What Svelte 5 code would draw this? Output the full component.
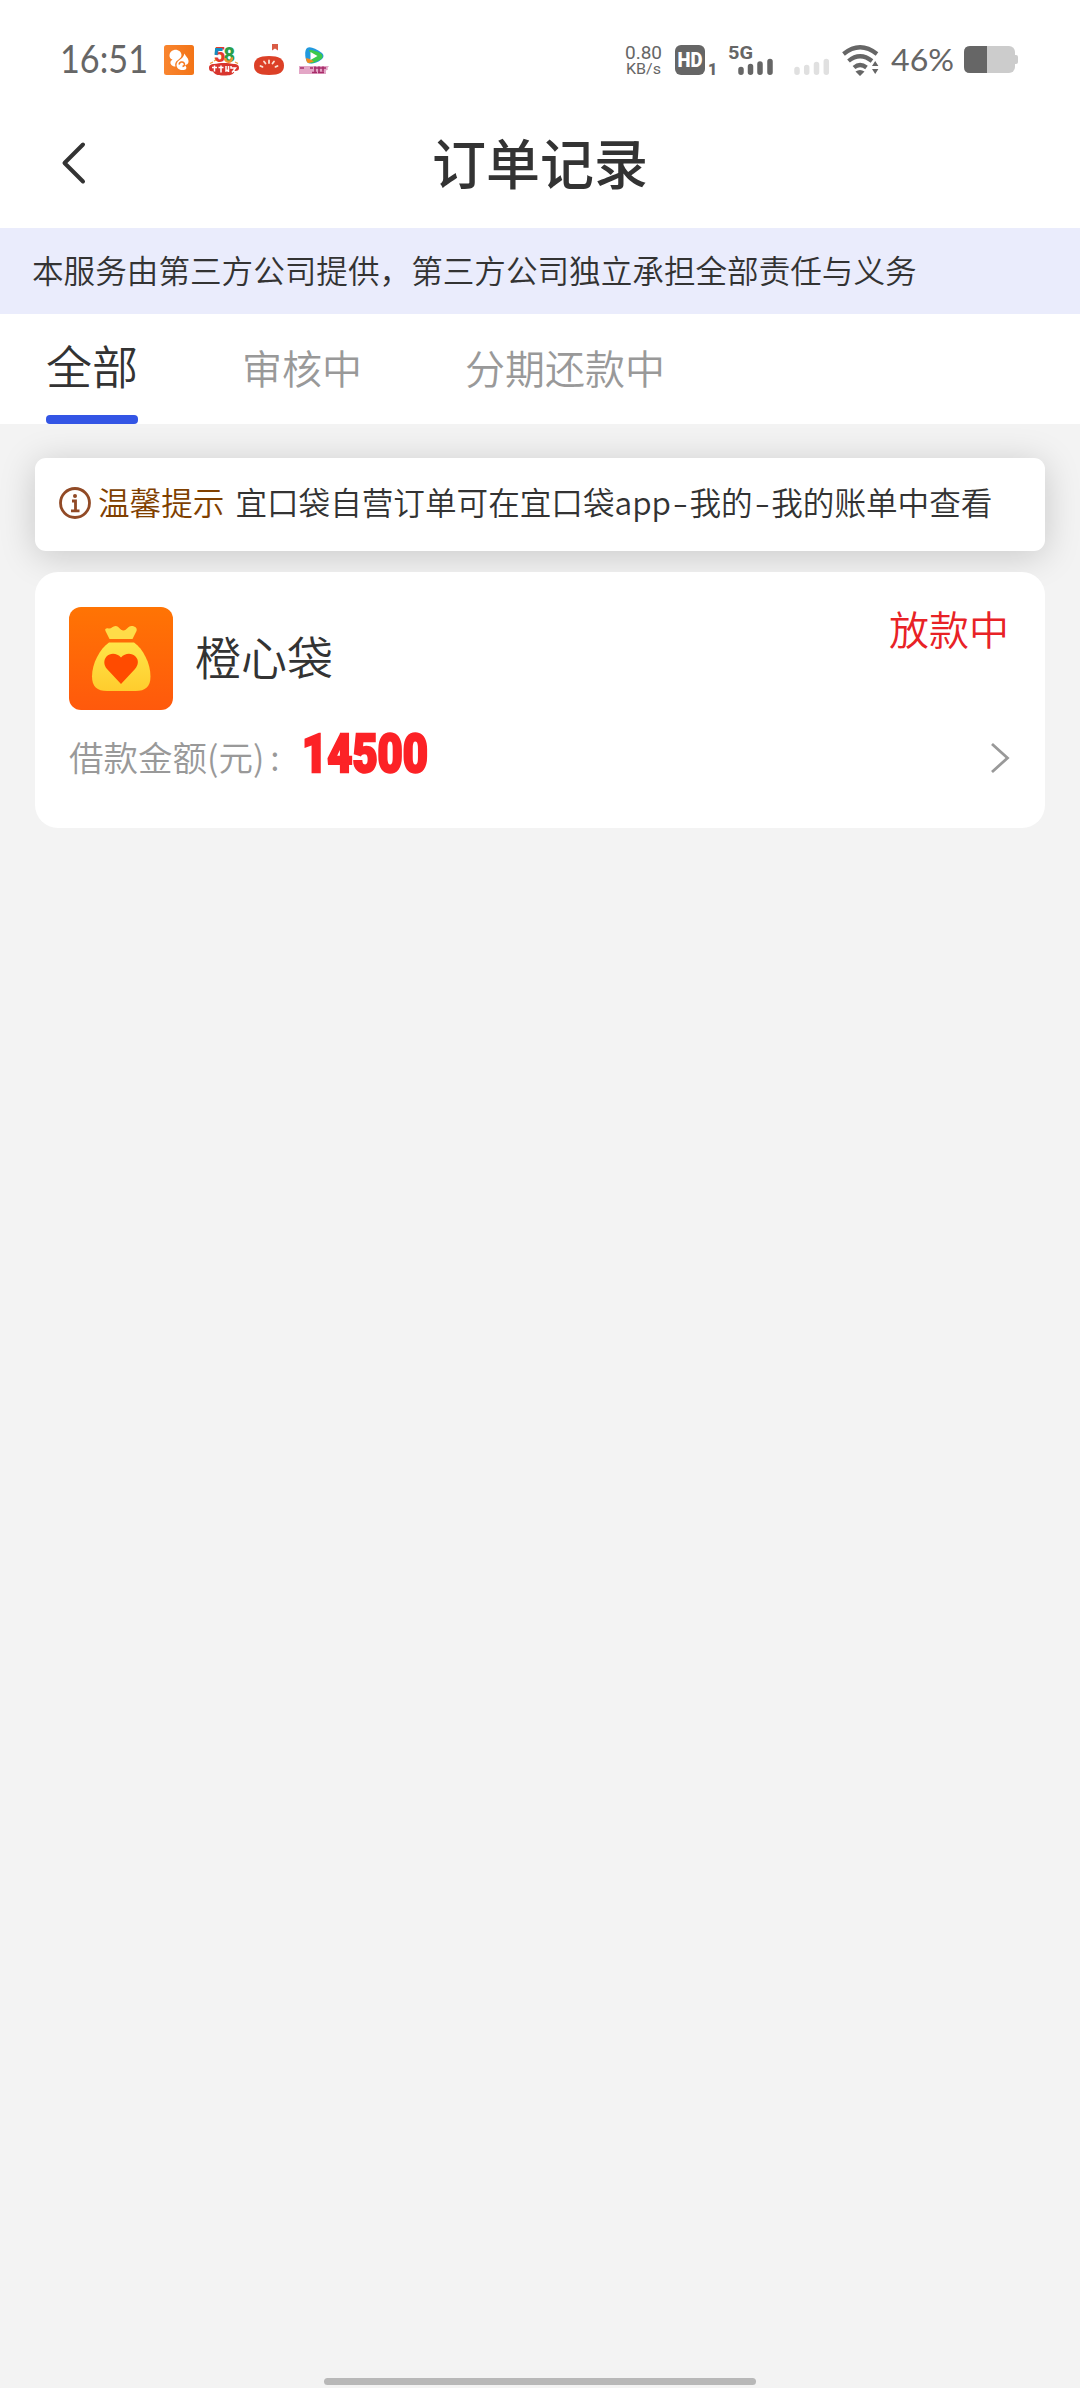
<script lang="ts">
	interface Order {
		name: string;
		amount: number;
		status: string;
	}

	const tabs = ['全部', '审核中', '分期还款中'];
	const orders: Order[] = [{ name: '橙心袋', amount: 14500, status: '放款中' }];

	let active = $state(0);
</script>

<div class="screen">
	<div class="status-bar">
		<svg class="clock" viewBox="0 0 88 40">
			<text x="0" y="33" textLength="88" lengthAdjust="spacingAndGlyphs">16:51</text>
		</svg>

		<div class="notifications">
			<!-- squirrel -->
			<svg viewBox="0 0 32 32">
				<defs>
					<linearGradient id="squirrel" x1="0" y1="0" x2="1" y2="0">
						<stop offset="0" stop-color="#f9852f" />
						<stop offset="1" stop-color="#f37417" />
					</linearGradient>
				</defs>
				<rect x="1" y="1" width="30" height="30" rx="2.5" fill="url(#squirrel)" />
				<path
					fill="#fff"
					d="M11 6c4-.8 7.500 2 7.500 5 0 2-1.500 3.500-3.500 5-2.500 1.500-3.500 4-2.500 6.500-3 0-5.500-2-5-4.500.3-1.500 1.500-2 2-2.500C5.500 15 5 7.500 11 6Z"
				/>
				<path
					fill="#fff"
					d="M21.500 9.500c1 3 4.500 4.500 4 8.500-.2 2-2 2.500-3.500 3.500 1.500 1 2 3 .5 4-3 1-6 .8-8-1.500-2-3-.5-6.500 2-8 2.500-1.500 4-3 5-6.500Z"
				/>
				<path fill="none" stroke="#f67c23" stroke-width="1.500" d="M16 20.500c.5-2.500 3.500-3.500 5-1.500 1 1.500.5 3-1.500 3.500" />
			</svg>

			<!-- 58 -->
			<svg viewBox="0 0 32 32">
				<g class="digits">
					<text x="6" y="18">5</text>
					<text x="15.500" y="18">8</text>
				</g>
				<path fill="none" stroke="#168cc2" stroke-width="3" d="M14.500 5.500H8.500L8 11" />
				<path fill="none" stroke="#f0912d" stroke-width="2.500" d="M17.300 14a3.300 3.300 0 1 0 6.400-.5" />
				<path fill="none" stroke="#e9a23b" stroke-width="1.200" d="m2 19.500 3-1.500m22 0 3 1.500M6 17l2-1" />
				<path fill="#d8352d" d="M1 24c0-3 2-4 5-4 6-1.500 14-1.500 20 0 3 0 5 1 5 4 0 2-1 3-4 3-2 4-5 4.500-11 4.500S7 31 5 27.500c-3 0-4-1-4-3.500Z" />
				<path fill="none" stroke="#fff" stroke-width="1.500" d="M4 23.500h5M6.500 21.500v6M10.500 23.500h5m-2.500-2v7M18 22v5l2.500-1m0-4v6M23 22v2h4.500l-3.500 4.500m1-2.500 2.500 2.500" />
			</svg>

			<!-- tomato -->
			<svg viewBox="0 0 32 32">
				<path fill="#d95b45" d="M19 0h6v6.500l-3-2-3 2Z" />
				<path fill="#dc4027" d="M1 21.500C1 15 6 12 16 12s15 3 15 9.500c0 6.500-4 9.500-15 9.500S1 28 1 21.500Z" />
				<path
					fill="none"
					stroke="#fbe3d4"
					stroke-width="1.800"
					stroke-linecap="round"
					d="M16 16.500V19m-5-1.500 1.500 2m8.500-2-1.500 2M7.500 22l2 .8m15-.8-2 .8"
				/>
			</svg>

			<!-- play -->
			<svg viewBox="0 0 32 32">
				<path fill="#2199dd" d="M9 4c3-2 8 0 15 5 2 2 2 4 0 6-6 5-11 5-14 4-3-2-4-13-1-15Z" />
				<path fill="#3cc94b" d="M11 6c5 0 10 2 12.500 4 2 2 1 5-2 6-5 3-8 4-10.500 2.500l3-5Z" />
				<path fill="#f28a20" d="M8 14c.3 4 1.300 5 3 5l5-1.500-4-2.500Z" />
				<path fill="#fff" d="m12.500 8 7 4-7 4Z" />
				<path fill="#e3a6c6" d="M1 22h30l-1.500 2 .5 1.500-2 1v3.500H1Z" />
				<path fill="none" stroke="#a72c69" stroke-width="1.600" d="M2 24h4m6 0h3m1 0h12M14 28.500h5m1 0h6M17 22.500v6m4-6v6m4-6v5" />
			</svg>
		</div>

		<svg class="rate" viewBox="0 0 38 34">
			<text x="0" y="15.500" font-size="19" textLength="37" lengthAdjust="spacingAndGlyphs">0.80</text>
			<text x="1" y="31" font-size="15.500" textLength="35" lengthAdjust="spacingAndGlyphs">KB/s</text>
		</svg>

		<svg class="hd" viewBox="0 0 42 32">
			<rect x="0" y="1" width="30" height="30" rx="6" fill="#666" />
			<text class="hd-label" x="2.500" y="23" textLength="25" lengthAdjust="spacingAndGlyphs">HD</text>
			<text x="33" y="31" font-size="16" font-weight="900">1</text>
		</svg>

		<svg class="signal" viewBox="0 0 44 32">
			<text x="-1" y="15" font-size="19" font-weight="700" textLength="25" lengthAdjust="spacingAndGlyphs">5G</text>
			<path stroke="#666" stroke-width="5.500" stroke-linecap="round" d="M12 25.500v2.700M21.500 22.500v5.700M31 20v8.200M41 17.500v10.700" />
		</svg>

		<svg class="signal-off" viewBox="0 0 36 32">
			<path stroke="#e0e0e0" stroke-width="5.500" stroke-linecap="round" d="M3 25.500v2.700M12.700 23.500v4.700M22.500 20.500v7.700M32.300 17.500v10.700" />
		</svg>

		<svg class="wifi" viewBox="0 0 38 32">
			<path fill="none" stroke="#666" stroke-width="4.200" d="M1.500 10q16.500-13.500 33.500 0M6.500 17q11.500-9.500 23.500 0M12 23.500q6-5 12.500 0" />
			<path fill="#666" d="M13.500 27.500q4.500-3 9 0L18 32ZM30 22l3.200-5 3.200 5ZM30 25h6.400l-3.200 5Z" />
		</svg>

		<svg class="percent" viewBox="0 0 64 34">
			<text x="0" y="28" font-size="31" textLength="63" lengthAdjust="spacingAndGlyphs">46%</text>
		</svg>

		<svg class="battery" viewBox="0 0 54 30">
			<rect width="51" height="27" y="1" rx="6" fill="#ccc" />
			<path fill="#ccc" d="M51 10h1q2 0 2 2v5q0 2-2 2h-1Z" />
			<path fill="#666" d="M6 1h17v27H6q-6 0-6-6V7q0-6 6-6Z" />
		</svg>
	</div>

	<header class="header">
		<svg class="back" viewBox="0 0 24 42">
			<path fill="none" stroke="#333" stroke-width="4" stroke-linecap="round" stroke-linejoin="round" d="M22 2.500 3.500 21 22 39.500" />
		</svg>
		<h1 class="title">订单记录</h1>
	</header>

	<p class="notice">本服务由第三方公司提供，第三方公司独立承担全部责任与义务</p>

	<nav class="tabs">
		{#each tabs as tab, i}
			<button class="tab" class:active={i === active} onclick={() => (active = i)}>{tab}</button>
		{/each}
	</nav>

	<main class="content">
		<div class="tip">
			<svg class="info" viewBox="0 0 32 32">
				<circle cx="16" cy="16" r="14.500" fill="none" stroke="#914a26" stroke-width="2.800" />
				<circle cx="16" cy="9" r="2" fill="#914a26" />
				<path fill="none" stroke="#914a26" stroke-width="2.800" d="M13 14h3.500v9.500M12 23.800h8.500" />
			</svg>
			<span class="tip-label">温馨提示</span>
			<span class="tip-text">宜口袋自营订单可在宜口袋app<i>-</i>我的<i>-</i>我的账单中查看</span>
		</div>

		{#each orders as order}
			<article class="order">
				<div class="order-head">
					<!-- money bag -->
					<svg class="logo" viewBox="0 0 104 104">
						<defs>
							<linearGradient id="logo-bg" x1="0" y1="0" x2="0" y2="1">
								<stop offset="0" stop-color="#ff7404" />
								<stop offset="1" stop-color="#ff590c" />
							</linearGradient>
							<linearGradient id="bag" x1="0" y1="0" x2="0" y2="1">
								<stop offset="0" stop-color="#ffe548" />
								<stop offset="1" stop-color="#ffcc2d" />
							</linearGradient>
						</defs>
						<rect width="104" height="103" rx="12" fill="url(#logo-bg)" />
						<path
							fill="#ffdc48"
							d="M36.500 24c-1-2 .5-3 3-2.500 3 .5 4-2.500 7-2.500 4 0 4 4.500 8 4.500 3.500 0 4-4.500 8-4.500 4 0 6 2.500 5 5l-4 8H40.500Z"
						/>
						<path
							fill="url(#bag)"
							d="M40 35.500h25c9 6 16.500 21 16.500 34 0 10-5 14.500-15 14.500H38c-10 0-15-4.500-15-14.500 0-13 8-28 17-34Z"
						/>
						<path fill="#ff4b00" d="M52 77 38 62c-3.500-4-3.500-9-.5-12.500 4-4 10.500-3.500 14.500 1 4-4.500 10.500-5 14.500-1 3.500 3.500 3 8.500-.5 12.500Z" />
					</svg>
					<span class="name">{order.name}</span>
					<span class="state">{order.status}</span>
				</div>

				<div class="order-foot">
					<span class="label">借款金额(元)<b>:</b></span>
					<svg class="amount" viewBox="0 0 132 48">
						<text x="2" y="43.500" textLength="126" lengthAdjust="spacingAndGlyphs">{order.amount}</text>
					</svg>
					<svg class="chevron" viewBox="0 0 20 32">
						<path fill="none" stroke="#999" stroke-width="2.800" d="m2 2 15.500 14L2 30" />
					</svg>
				</div>
			</article>
		{/each}
	</main>

	<div class="home-indicator"></div>
</div>

<style>
	:global(body) {
		margin: 0;
		background: #f3f3f3;
	}

	.screen {
		display: flex;
		flex-direction: column;
		box-sizing: border-box;
		width: 1080px;
		height: 2388px;
		padding-bottom: 3px;
		background: #f3f3f3;
		color: #333;
		font-weight: 350;
		font-family: 'Noto Sans CJK SC', sans-serif;
	}

	svg {
		flex: none;
		display: block;
		overflow: visible;
	}

	.status-bar {
		display: flex;
		align-items: center;
		box-sizing: border-box;
		height: 118px;
		padding: 1px 62px 0 60px;
		background: #fff;
		font-weight: 400;

		text {
			fill: #666;
			font-family: Roboto, sans-serif;
		}
	}

	.clock {
		width: 88px;
		height: 40px;

		text {
			font-size: 38px;
			font-family: Lato, sans-serif;
		}
	}

	.notifications {
		display: flex;
		gap: 13px;
		margin-left: 15px;

		svg {
			width: 32px;
			height: 32px;
		}

		.digits text {
			font-weight: 900;
			font-size: 20px;
		}
		.digits text:first-child {
			fill: #e43a2c;
		}
		.digits text:last-child {
			fill: #2b9f48;
		}
	}

	.rate {
		width: 38px;
		height: 34px;
		margin-left: auto;
	}

	.hd {
		width: 42px;
		height: 32px;
		margin-left: 12px;

		.hd-label {
			fill: #fff;
			font-weight: 900;
			font-size: 20px;
		}
	}

	.signal {
		width: 44px;
		height: 32px;
		margin-left: 12px;
	}

	.signal-off {
		width: 36px;
		height: 32px;
		margin-left: 21px;
	}

	.wifi {
		width: 38px;
		height: 32px;
		margin-left: 12px;
	}

	.percent {
		width: 64px;
		height: 34px;
		margin-left: 11px;

		text {
			font-family: Lato, sans-serif;
		}
	}

	.battery {
		width: 54px;
		height: 30px;
		margin-left: 9px;
	}

	.header {
		display: grid;
		grid-template-columns: 120px 1fr 120px;
		align-items: center;
		height: 110px;
		background: #fff;
	}

	.back {
		width: 24px;
		height: 42px;
		margin: -20px 0 0 61px;
	}

	.title {
		margin: -22px 0 0;
		font-weight: 500;
		font-size: 54px;
		line-height: 80px;
		text-align: center;
	}

	.notice {
		height: 86px;
		margin: 0;
		padding-left: 32px;
		background: #eaecfc;
		font-size: 31.6px;
		line-height: 83px;
		white-space: nowrap;
	}

	.tabs {
		display: flex;
		gap: 104px;
		height: 110px;
		padding-left: 46px;
		background: #fff;
	}

	.tab {
		box-sizing: border-box;
		height: 110px;
		padding: 0 0 4px;
		border: 0;
		background: none;
		color: #999;
		font-weight: inherit;
		font-size: 40px;
		font-family: inherit;
		line-height: 106px;

		& + .tab + .tab {
			margin-left: -1px;
		}

		&.active {
			display: flex;
			flex-direction: column;
			padding: 0;
			color: #333;
			font-size: 46px;
			line-height: 101px;

			&::after {
				width: 100%;
				height: 9px;
				border-radius: 4px;
				background: #3355e5;
				content: '';
			}
		}
	}

	.content {
		display: flex;
		flex: 1;
		flex-direction: column;
		gap: 21px;
		padding: 34px 35px 0;
	}

	.tip {
		display: flex;
		align-items: center;
		box-sizing: border-box;
		height: 93px;
		padding: 0 24px 3px;
		border-radius: 11px;
		background: #fff;
		box-shadow: 0 5px 36px rgb(0 0 0 / 18%);
		font-size: 31.6px;
		line-height: 46px;
		white-space: nowrap;

		span {
			margin-top: -4px;
		}
	}

	.info {
		width: 32px;
		height: 32px;
	}

	.tip-label {
		margin-left: 7px;
		color: #804000;
	}

	.tip-text {
		margin-left: 11px;

		i {
			display: inline-block;
			width: 18.5px;
			font-style: normal;
			text-align: center;
			transform: scaleX(1.4);
		}
	}

	.order {
		box-sizing: border-box;
		height: 256px;
		padding: 35px 35px 0 34px;
		border-radius: 23px;
		background: #fff;
	}

	.order-head {
		display: flex;
		align-items: center;
		height: 104px;
	}

	.logo {
		width: 104px;
		height: 104px;
	}

	.name {
		margin: -8px 0 0 22px;
		font-size: 46px;
		line-height: 66px;
	}

	.state {
		align-self: flex-start;
		margin: -9px 1px 0 auto;
		color: #e82226;
		font-size: 40px;
		line-height: 60px;
	}

	.order-foot {
		display: flex;
		align-items: center;
		height: 60px;
		margin-top: 17px;
	}

	.label {
		margin-top: -4px;
		color: #999;
		font-size: 34.5px;
		line-height: 50px;

		b {
			margin-left: 6px;
			font-weight: inherit;
		}
	}

	.amount {
		width: 132px;
		height: 48px;
		margin: -13px 0 0 20px;

		text {
			fill: #fc2226;
			stroke: #fc2226;
			stroke-width: 2.5px;
			font-weight: 900;
			font-size: 54px;
			font-family: Roboto, sans-serif;
		}
	}

	.chevron {
		width: 20px;
		height: 32px;
		margin-left: auto;
	}

	.home-indicator {
		width: 432px;
		height: 7px;
		margin: 0 auto;
		border-radius: 4px;
		background: #b8b8b8;
	}
</style>
